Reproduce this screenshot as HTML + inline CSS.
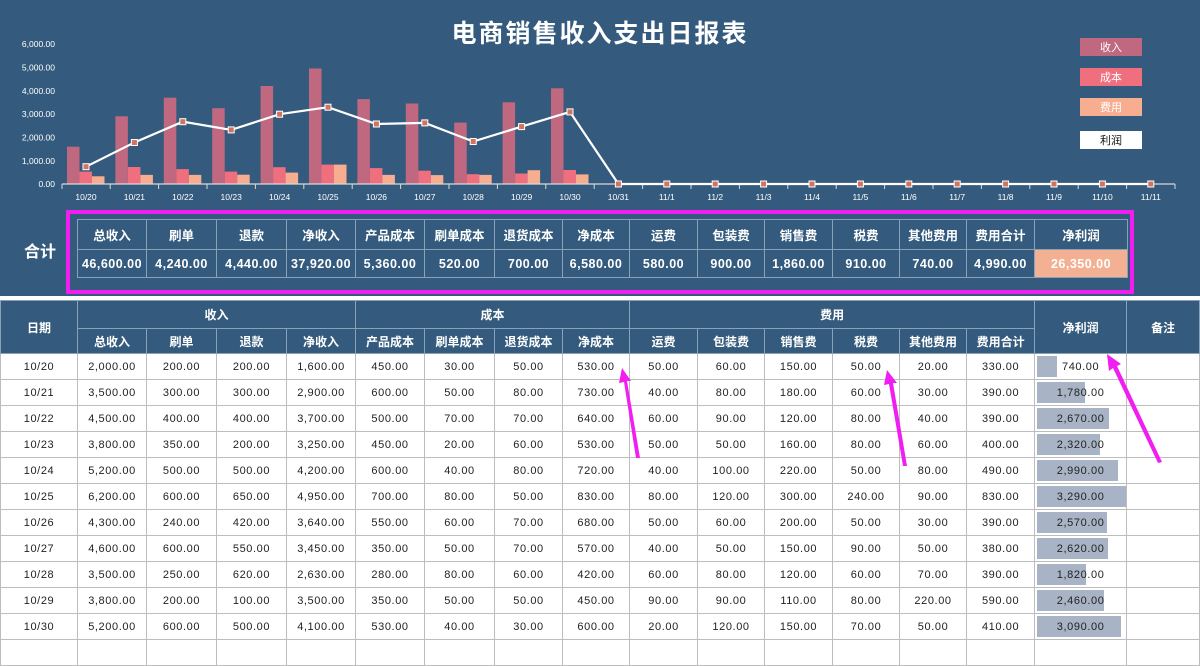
<!DOCTYPE html>
<html><head><meta charset="utf-8"><style>
*{margin:0;padding:0;box-sizing:border-box}
body{width:1200px;height:642px;overflow:hidden;background:#fff;font-family:"Liberation Sans","Noto Sans CJK SC",sans-serif;position:relative}
#top{position:absolute;left:0;top:0;width:1200px;height:296px;background:#345b7d}
#frame{position:absolute;left:66px;top:210px;width:1068px;height:84px;border:4px solid #f01ef0}
table{border-collapse:collapse;table-layout:fixed;position:absolute}
td{text-align:center;font-size:12px;overflow:hidden;white-space:nowrap}
#sum{left:77px;top:219px;width:1050px}
#sum td{border:1px solid #8aa2b8;color:#fff;font-weight:bold;background:#345b7d}
#sum tr.h td{height:30px;font-size:12.5px}
#sum tr.v td{height:28px;font-size:12.5px;letter-spacing:.5px}
#main{left:0;top:300px;width:1199px}
#main td{border:1px solid #bdbdbd;height:26px;color:#222;font-size:11px;letter-spacing:.6px}
#main tr.h td{background:#345b7d;color:#fff;font-weight:bold;border-color:#8aa2b8;font-size:12px;letter-spacing:0}
#main tr.h1 td{height:28px}
#main tr.h2 td{height:25px}
.np{position:relative}
.np span{position:absolute;left:2px;top:2px;bottom:2px;background:#a8b4c6}
.np b{position:relative;font-weight:normal}
</style></head><body>
<div id="top"></div>
<svg width="1200" height="210" style="position:absolute;left:0;top:0" font-family="Liberation Sans, Noto Sans CJK SC, sans-serif">
<text x="600" y="42" fill="#fff" font-size="25" font-weight="bold" text-anchor="middle" letter-spacing="2">电商销售收入支出日报表</text>
<g fill="#fff" font-size="8.5" text-anchor="end">
<text x="55" y="47">6,000.00</text><text x="55" y="70.5">5,000.00</text><text x="55" y="94">4,000.00</text><text x="55" y="117">3,000.00</text><text x="55" y="140.5">2,000.00</text><text x="55" y="164">1,000.00</text><text x="55" y="187">0.00</text>
</g>
<g fill="#c0687f">
<rect x="67" y="146.7" width="12.5" height="37.3"/><rect x="115.4" y="116.3" width="12.5" height="67.7"/><rect x="163.8" y="97.7" width="12.5" height="86.3"/><rect x="212.2" y="108.2" width="12.5" height="75.8"/><rect x="260.6" y="86" width="12.5" height="98"/><rect x="309" y="68.5" width="12.5" height="115.5"/><rect x="357.4" y="99.1" width="12.5" height="84.9"/><rect x="405.8" y="103.5" width="12.5" height="80.5"/><rect x="454.2" y="122.6" width="12.5" height="61.4"/><rect x="502.6" y="102.3" width="12.5" height="81.7"/><rect x="551" y="88.3" width="12.5" height="95.7"/>
</g>
<g fill="#ef6f7e">
<rect x="79.5" y="171.6" width="12.5" height="12.4"/><rect x="127.9" y="167" width="12.5" height="17"/><rect x="176.3" y="169.1" width="12.5" height="14.9"/><rect x="224.7" y="171.6" width="12.5" height="12.4"/><rect x="273.1" y="167.2" width="12.5" height="16.8"/><rect x="321.5" y="164.6" width="12.5" height="19.4"/><rect x="369.9" y="168.1" width="12.5" height="15.9"/><rect x="418.3" y="170.7" width="12.5" height="13.3"/><rect x="466.7" y="174.2" width="12.5" height="9.8"/><rect x="515.1" y="173.5" width="12.5" height="10.5"/><rect x="563.5" y="170" width="12.5" height="14"/>
</g>
<g fill="#f7ad8f">
<rect x="92" y="176.3" width="12.5" height="7.7"/><rect x="140.4" y="174.9" width="12.5" height="9.1"/><rect x="188.8" y="174.9" width="12.5" height="9.1"/><rect x="237.2" y="174.7" width="12.5" height="9.3"/><rect x="285.6" y="172.6" width="12.5" height="11.4"/><rect x="334" y="164.6" width="12.5" height="19.4"/><rect x="382.4" y="174.9" width="12.5" height="9.1"/><rect x="430.8" y="175.1" width="12.5" height="8.9"/><rect x="479.2" y="174.9" width="12.5" height="9.1"/><rect x="527.6" y="170.2" width="12.5" height="13.8"/><rect x="576" y="174.4" width="12.5" height="9.6"/>
</g>
<line x1="62" y1="184" x2="1175" y2="184" stroke="#d9d9d9" stroke-width="1.2"/>
<g stroke="#d9d9d9" stroke-width="1">
<path d="M62 184v5M110.2 184v5M158.6 184v5M207 184v5M255.4 184v5M303.8 184v5M352.2 184v5M400.6 184v5M449 184v5M497.4 184v5M545.8 184v5M594.2 184v5M642.6 184v5M691 184v5M739.4 184v5M787.8 184v5M836.2 184v5M884.6 184v5M933 184v5M981.4 184v5M1029.8 184v5M1078.2 184v5M1126.6 184v5M1175 184v5"/>
</g>
<polyline fill="none" stroke="#fff" stroke-width="2.2" points="86,166.7 134.4,142.5 182.8,121.7 231.2,129.9 279.6,114.2 328,107.2 376.4,124 424.8,122.9 473.2,141.5 521.6,126.6 570,111.9 618.4,184 666.8,184 715.2,184 763.6,184 812,184 860.4,184 908.8,184 957.2,184 1005.6,184 1054,184 1102.4,184 1150.8,184"/>
<g fill="#d2735f" stroke="#fff" stroke-width="1">
<rect x="83" y="163.7" width="6" height="6"/><rect x="131.4" y="139.5" width="6" height="6"/><rect x="179.8" y="118.7" width="6" height="6"/><rect x="228.2" y="126.9" width="6" height="6"/><rect x="276.6" y="111.2" width="6" height="6"/><rect x="325" y="104.2" width="6" height="6"/><rect x="373.4" y="121" width="6" height="6"/><rect x="421.8" y="119.9" width="6" height="6"/><rect x="470.2" y="138.5" width="6" height="6"/><rect x="518.6" y="123.6" width="6" height="6"/><rect x="567" y="108.9" width="6" height="6"/>
<rect x="615.4" y="181" width="6" height="6"/><rect x="663.8" y="181" width="6" height="6"/><rect x="712.2" y="181" width="6" height="6"/><rect x="760.6" y="181" width="6" height="6"/><rect x="809" y="181" width="6" height="6"/><rect x="857.4" y="181" width="6" height="6"/><rect x="905.8" y="181" width="6" height="6"/><rect x="954.2" y="181" width="6" height="6"/><rect x="1002.6" y="181" width="6" height="6"/><rect x="1051" y="181" width="6" height="6"/><rect x="1099.4" y="181" width="6" height="6"/><rect x="1147.8" y="181" width="6" height="6"/>
</g>
<g fill="#fff" font-size="8.5" text-anchor="middle">
<text x="86" y="200">10/20</text><text x="134.4" y="200">10/21</text><text x="182.8" y="200">10/22</text><text x="231.2" y="200">10/23</text><text x="279.6" y="200">10/24</text><text x="328" y="200">10/25</text><text x="376.4" y="200">10/26</text><text x="424.8" y="200">10/27</text><text x="473.2" y="200">10/28</text><text x="521.6" y="200">10/29</text><text x="570" y="200">10/30</text><text x="618.4" y="200">10/31</text><text x="666.8" y="200">11/1</text><text x="715.2" y="200">11/2</text><text x="763.6" y="200">11/3</text><text x="812" y="200">11/4</text><text x="860.4" y="200">11/5</text><text x="908.8" y="200">11/6</text><text x="957.2" y="200">11/7</text><text x="1005.6" y="200">11/8</text><text x="1054" y="200">11/9</text><text x="1102.4" y="200">11/10</text><text x="1150.8" y="200">11/11</text>
</g>
<g font-size="11" text-anchor="middle">
<rect x="1080" y="38" width="62" height="18" fill="#c0687f"/><text x="1111" y="51" fill="#fff">收入</text>
<rect x="1080" y="68" width="62" height="18" fill="#ef6f7e"/><text x="1111" y="81" fill="#fff">成本</text>
<rect x="1080" y="98" width="62" height="18" fill="#f7ad8f"/><text x="1111" y="111" fill="#fff">费用</text>
<rect x="1080" y="131" width="62" height="18" fill="#fff"/><text x="1111" y="144" fill="#111">利润</text>
</g>
</svg>
<div style="position:absolute;left:24px;top:238px;color:#fff;font-size:16px;font-weight:bold">合计</div>
<div id="frame"></div>
<table id="sum">
<colgroup><col width="69"><col width="70"><col width="70"><col width="69"><col width="69"><col width="70"><col width="68"><col width="67"><col width="68"><col width="67"><col width="68"><col width="67"><col width="67"><col width="68"><col width="93"></colgroup>
<tr class="h"><td>总收入</td><td>刷单</td><td>退款</td><td>净收入</td><td>产品成本</td><td>刷单成本</td><td>退货成本</td><td>净成本</td><td>运费</td><td>包装费</td><td>销售费</td><td>税费</td><td>其他费用</td><td>费用合计</td><td>净利润</td></tr>
<tr class="v"><td>46,600.00</td><td>4,240.00</td><td>4,440.00</td><td>37,920.00</td><td>5,360.00</td><td>520.00</td><td>700.00</td><td>6,580.00</td><td>580.00</td><td>900.00</td><td>1,860.00</td><td>910.00</td><td>740.00</td><td>4,990.00</td><td style="background:#f4b092">26,350.00</td></tr>
</table>
<table id="main">
<colgroup><col width="77"><col width="69"><col width="70"><col width="70"><col width="69"><col width="69"><col width="70"><col width="68"><col width="67"><col width="68"><col width="67"><col width="68"><col width="67"><col width="67"><col width="68"><col width="92"><col width="73"></colgroup>
<tr class="h h1"><td rowspan="2">日期</td><td colspan="4">收入</td><td colspan="4">成本</td><td colspan="6">费用</td><td rowspan="2">净利润</td><td rowspan="2">备注</td></tr>
<tr class="h h2"><td>总收入</td><td>刷单</td><td>退款</td><td>净收入</td><td>产品成本</td><td>刷单成本</td><td>退货成本</td><td>净成本</td><td>运费</td><td>包装费</td><td>销售费</td><td>税费</td><td>其他费用</td><td>费用合计</td></tr>
<tr><td>10/20</td><td>2,000.00</td><td>200.00</td><td>200.00</td><td>1,600.00</td><td>450.00</td><td>30.00</td><td>50.00</td><td>530.00</td><td>50.00</td><td>60.00</td><td>150.00</td><td>50.00</td><td>20.00</td><td>330.00</td><td class="np"><span style="width:20px"></span><b>740.00</b></td><td></td></tr>
<tr><td>10/21</td><td>3,500.00</td><td>300.00</td><td>300.00</td><td>2,900.00</td><td>600.00</td><td>50.00</td><td>80.00</td><td>730.00</td><td>40.00</td><td>80.00</td><td>180.00</td><td>60.00</td><td>30.00</td><td>390.00</td><td class="np"><span style="width:48px"></span><b>1,780.00</b></td><td></td></tr>
<tr><td>10/22</td><td>4,500.00</td><td>400.00</td><td>400.00</td><td>3,700.00</td><td>500.00</td><td>70.00</td><td>70.00</td><td>640.00</td><td>60.00</td><td>90.00</td><td>120.00</td><td>80.00</td><td>40.00</td><td>390.00</td><td class="np"><span style="width:72px"></span><b>2,670.00</b></td><td></td></tr>
<tr><td>10/23</td><td>3,800.00</td><td>350.00</td><td>200.00</td><td>3,250.00</td><td>450.00</td><td>20.00</td><td>60.00</td><td>530.00</td><td>50.00</td><td>50.00</td><td>160.00</td><td>80.00</td><td>60.00</td><td>400.00</td><td class="np"><span style="width:63px"></span><b>2,320.00</b></td><td></td></tr>
<tr><td>10/24</td><td>5,200.00</td><td>500.00</td><td>500.00</td><td>4,200.00</td><td>600.00</td><td>40.00</td><td>80.00</td><td>720.00</td><td>40.00</td><td>100.00</td><td>220.00</td><td>50.00</td><td>80.00</td><td>490.00</td><td class="np"><span style="width:81px"></span><b>2,990.00</b></td><td></td></tr>
<tr><td>10/25</td><td>6,200.00</td><td>600.00</td><td>650.00</td><td>4,950.00</td><td>700.00</td><td>80.00</td><td>50.00</td><td>830.00</td><td>80.00</td><td>120.00</td><td>300.00</td><td>240.00</td><td>90.00</td><td>830.00</td><td class="np"><span style="width:89px"></span><b>3,290.00</b></td><td></td></tr>
<tr><td>10/26</td><td>4,300.00</td><td>240.00</td><td>420.00</td><td>3,640.00</td><td>550.00</td><td>60.00</td><td>70.00</td><td>680.00</td><td>50.00</td><td>60.00</td><td>200.00</td><td>50.00</td><td>30.00</td><td>390.00</td><td class="np"><span style="width:70px"></span><b>2,570.00</b></td><td></td></tr>
<tr><td>10/27</td><td>4,600.00</td><td>600.00</td><td>550.00</td><td>3,450.00</td><td>350.00</td><td>50.00</td><td>70.00</td><td>570.00</td><td>40.00</td><td>50.00</td><td>150.00</td><td>90.00</td><td>50.00</td><td>380.00</td><td class="np"><span style="width:71px"></span><b>2,620.00</b></td><td></td></tr>
<tr><td>10/28</td><td>3,500.00</td><td>250.00</td><td>620.00</td><td>2,630.00</td><td>280.00</td><td>80.00</td><td>60.00</td><td>420.00</td><td>60.00</td><td>80.00</td><td>120.00</td><td>60.00</td><td>70.00</td><td>390.00</td><td class="np"><span style="width:49px"></span><b>1,820.00</b></td><td></td></tr>
<tr><td>10/29</td><td>3,800.00</td><td>200.00</td><td>100.00</td><td>3,500.00</td><td>350.00</td><td>50.00</td><td>50.00</td><td>450.00</td><td>90.00</td><td>90.00</td><td>110.00</td><td>80.00</td><td>220.00</td><td>590.00</td><td class="np"><span style="width:67px"></span><b>2,460.00</b></td><td></td></tr>
<tr><td>10/30</td><td>5,200.00</td><td>600.00</td><td>500.00</td><td>4,100.00</td><td>530.00</td><td>40.00</td><td>30.00</td><td>600.00</td><td>20.00</td><td>120.00</td><td>150.00</td><td>70.00</td><td>50.00</td><td>410.00</td><td class="np"><span style="width:84px"></span><b>3,090.00</b></td><td></td></tr>
<tr><td></td><td></td><td></td><td></td><td></td><td></td><td></td><td></td><td></td><td></td><td></td><td></td><td></td><td></td><td></td><td></td><td></td></tr>
</table>
<svg width="1200" height="642" style="position:absolute;left:0;top:0" fill="#f01ef0">
<polygon points="622,368 631,381 627,381 640,458 636,458 624,382 619,383"/>
<polygon points="887,370 897,383 893,383 907,466 903,466 889,384 884,385"/>
<polygon points="1107,354 1121,364 1117,366 1162,462 1158,463 1113,368 1109,371"/>
</svg>
</body></html>
